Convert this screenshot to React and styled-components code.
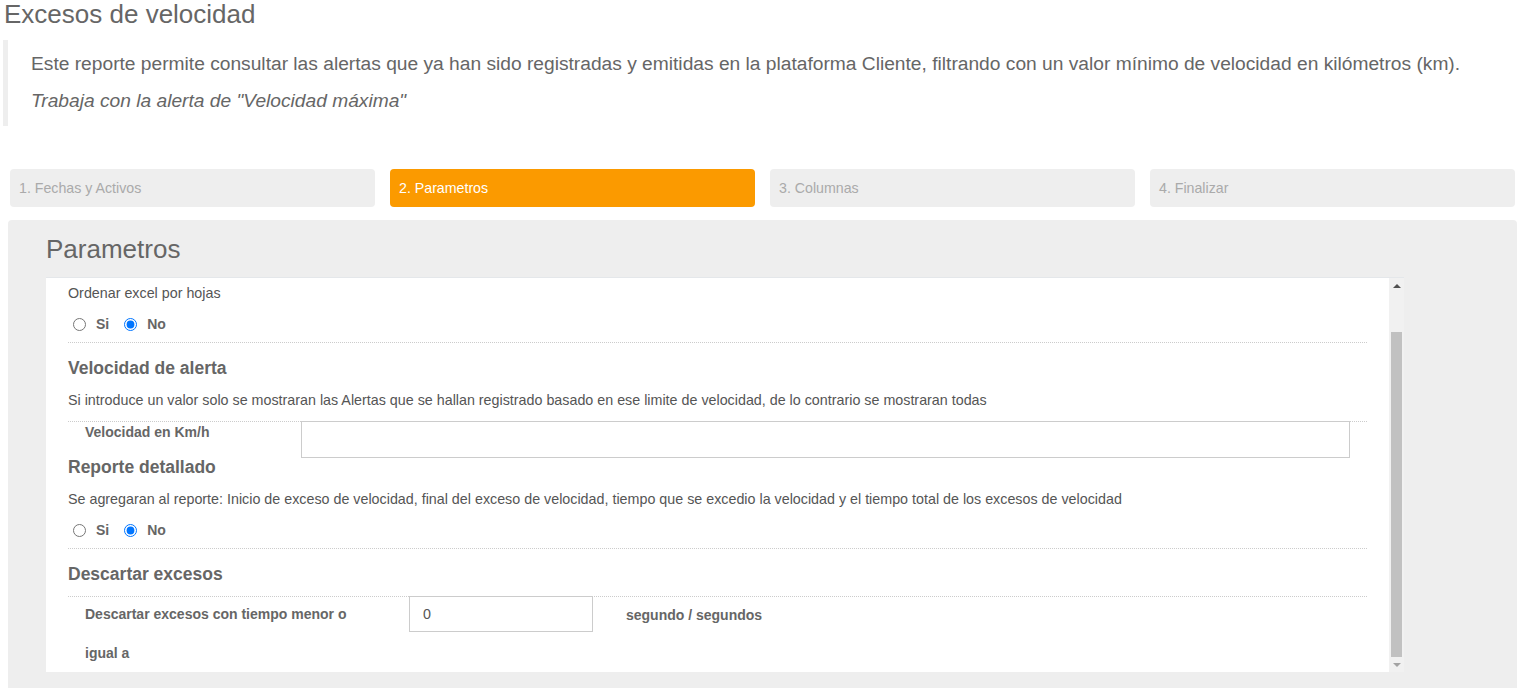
import React from "react";
import styled, { createGlobalStyle } from "styled-components";

const GlobalStyle = createGlobalStyle`
  html, body { margin: 0; padding: 0; background: #fff; overflow: hidden; }
  body { font-family: "Liberation Sans", Arial, sans-serif; color: #555; }
  * { box-sizing: border-box; }
`;

const Page = styled.div`
  width: 1532px;
  height: 688px;
  overflow: hidden;
`;

const Title = styled.h1`
  margin: 0;
  padding-left: 4px;
  font-size: 26px;
  line-height: 28px;
  font-weight: 400;
  color: #666;
`;

const Quote = styled.blockquote`
  margin: 12px 0 0 3px;
  padding: 10px 0 12px 23px;
  border-left: 5px solid #eee;
`;

const QuoteText = styled.p`
  margin: ${(p) => (p.$first ? "0" : "10px 0 0")};
  font-size: 19.2px;
  line-height: 27px;
  color: #666;
  font-style: ${(p) => (p.$italic ? "italic" : "normal")};
`;

const Steps = styled.div`
  display: flex;
  gap: 15px;
  margin-top: 43px;
  padding-left: 10px;
`;

const Step = styled.div`
  width: 365px;
  height: 38px;
  border-radius: 4px;
  display: flex;
  align-items: center;
  padding-left: 9px;
  font-size: 14.2px;
  background: ${(p) => (p.$active ? "#fb9a00" : "#eee")};
  color: ${(p) => (p.$active ? "#fff" : "#aaa")};
`;

const Panel = styled.div`
  margin: 13px 0 0 8px;
  width: 1509px;
  background: #eee;
  border-radius: 4px;
  padding: 15px 0 30px 38px;
`;

const PanelTitle = styled.h2`
  margin: 0;
  font-size: 26px;
  line-height: 28px;
  font-weight: 400;
  color: #666;
`;

const ScrollBox = styled.div`
  margin-top: 14px;
  width: 1358px;
  height: 395px;
  display: flex;
  border-top: 1px solid #e4e7ea;
`;

const Content = styled.div`
  flex: 1;
  background: #fff;
  overflow: hidden;
  padding: 5px 22px 0;
`;

const Text = styled.div`
  font-size: 14.3px;
  line-height: 20px;
  color: #555;
  margin-top: ${(p) => p.$mt || 0}px;
`;

const Heading = styled.h4`
  margin: ${(p) => p.$mt || 0}px 0 0;
  font-size: 17.5px;
  line-height: 22px;
  font-weight: 700;
  color: #666;
`;

const RadioRow = styled.div`
  display: flex;
  align-items: center;
  height: 20px;
  margin-top: ${(p) => p.$mt || 0}px;
  padding-left: 5px;
`;

const RadioOption = styled.label`
  display: inline-flex;
  align-items: center;
  gap: 10px;
  margin-right: 15px;
  font-size: 14px;
  font-weight: 700;
  color: #666;
`;

const Radio = styled.input`
  margin: 0;
  width: 13px;
  height: 13px;
`;

const Rule = styled.hr`
  margin: ${(p) => p.$mt || 0}px 0 0;
  border: 0;
  border-top: 1px dotted #ccc;
  height: 0;
`;

const FieldRow = styled.div`
  display: flex;
  align-items: flex-start;
  margin-top: ${(p) => p.$mt || 0}px;
  height: ${(p) => p.$h}px;
`;

const FieldLabel = styled.div`
  width: ${(p) => p.$w}px;
  padding: 0 ${(p) => p.$pr || 0}px 0 17px;
  margin-top: ${(p) => p.$mt || 0}px;
  font-size: 14px;
  font-weight: 700;
  line-height: ${(p) => p.$lh || 20}px;
  color: #666;
  flex-shrink: 0;
`;

const Input = styled.input`
  width: ${(p) => p.$w}px;
  height: ${(p) => p.$h}px;
  margin-top: ${(p) => p.$mt || 0}px;
  border: 1px solid #ccc;
  padding: 0 13px;
  font-family: "Liberation Sans", Arial, sans-serif;
  font-size: 14.3px;
  color: #555;
  background: #fff;
  outline: none;
`;

const Unit = styled.div`
  margin-left: 33px;
  font-size: 14px;
  font-weight: 700;
  line-height: 36px;
  color: #666;
  margin-top: 0;
`;

const Scrollbar = styled.div`
  width: 15px;
  background: #f1f1f1;
  display: flex;
  flex-direction: column;
`;

const ArrowBtn = styled.div`
  height: 15px;
  display: flex;
  align-items: center;
  justify-content: center;
  &::before {
    content: "";
    width: 0;
    height: 0;
    border-left: 4px solid transparent;
    border-right: 4px solid transparent;
    ${(p) =>
      p.$down
        ? "border-top: 4px solid #a3a3a3;"
        : "border-bottom: 4px solid #505050;"}
  }
`;

const Track = styled.div`
  flex: 1;
  display: flex;
  flex-direction: column;
  padding: 39px 2px 0;
`;

const Thumb = styled.div`
  flex: 1;
  background: #c1c1c1;
`;

function YesNo({ name, mt }) {
  return (
    <RadioRow $mt={mt}>
      <RadioOption>
        <Radio type="radio" name={name} />
        Si
      </RadioOption>
      <RadioOption>
        <Radio type="radio" name={name} defaultChecked />
        No
      </RadioOption>
    </RadioRow>
  );
}

export default function App() {
  return (
    <Page>
      <GlobalStyle />
      <Title>Excesos de velocidad</Title>
      <Quote>
        <QuoteText $first>
          Este reporte permite consultar las alertas que ya han sido registradas y emitidas en la plataforma Cliente, filtrando con un valor mínimo de velocidad en kilómetros (km).
        </QuoteText>
        <QuoteText $italic>Trabaja con la alerta de "Velocidad máxima"</QuoteText>
      </Quote>
      <Steps>
        <Step>1. Fechas y Activos</Step>
        <Step $active>2. Parametros</Step>
        <Step>3. Columnas</Step>
        <Step>4. Finalizar</Step>
      </Steps>
      <Panel>
        <PanelTitle>Parametros</PanelTitle>
        <ScrollBox>
          <Content>
            <Text>Ordenar excel por hojas</Text>
            <YesNo name="hojas" mt={11} />
            <Rule $mt={8} />
            <Heading $mt={14}>Velocidad de alerta</Heading>
            <Text $mt={11}>
              Si introduce un valor solo se mostraran las Alertas que se hallan registrado basado en ese limite de velocidad, de lo contrario se mostraran todas
            </Text>
            <Rule $mt={11} />
            <FieldRow $h={36}>
              <FieldLabel $w={233}>Velocidad en Km/h</FieldLabel>
              <Input $w={1049} $h={37} $mt={-1} />
            </FieldRow>
            <Heading $mt={-2}>Reporte detallado</Heading>
            <Text $mt={11}>
              Se agregaran al reporte: Inicio de exceso de velocidad, final del exceso de velocidad, tiempo que se excedio la velocidad y el tiempo total de los excesos de velocidad
            </Text>
            <YesNo name="detallado" mt={11} />
            <Rule $mt={8} />
            <Heading $mt={14}>Descartar excesos</Heading>
            <Rule $mt={11} />
            <FieldRow $h={80}>
              <FieldLabel $w={341} $pr={40} $lh={39} $mt={-2}>
                Descartar excesos con tiempo menor o igual a
              </FieldLabel>
              <Input $w={184} $h={36} $mt={-1} defaultValue="0" />
              <Unit>segundo / segundos</Unit>
            </FieldRow>
          </Content>
          <Scrollbar>
            <ArrowBtn />
            <Track>
              <Thumb />
            </Track>
            <ArrowBtn $down />
          </Scrollbar>
        </ScrollBox>
      </Panel>
    </Page>
  );
}
